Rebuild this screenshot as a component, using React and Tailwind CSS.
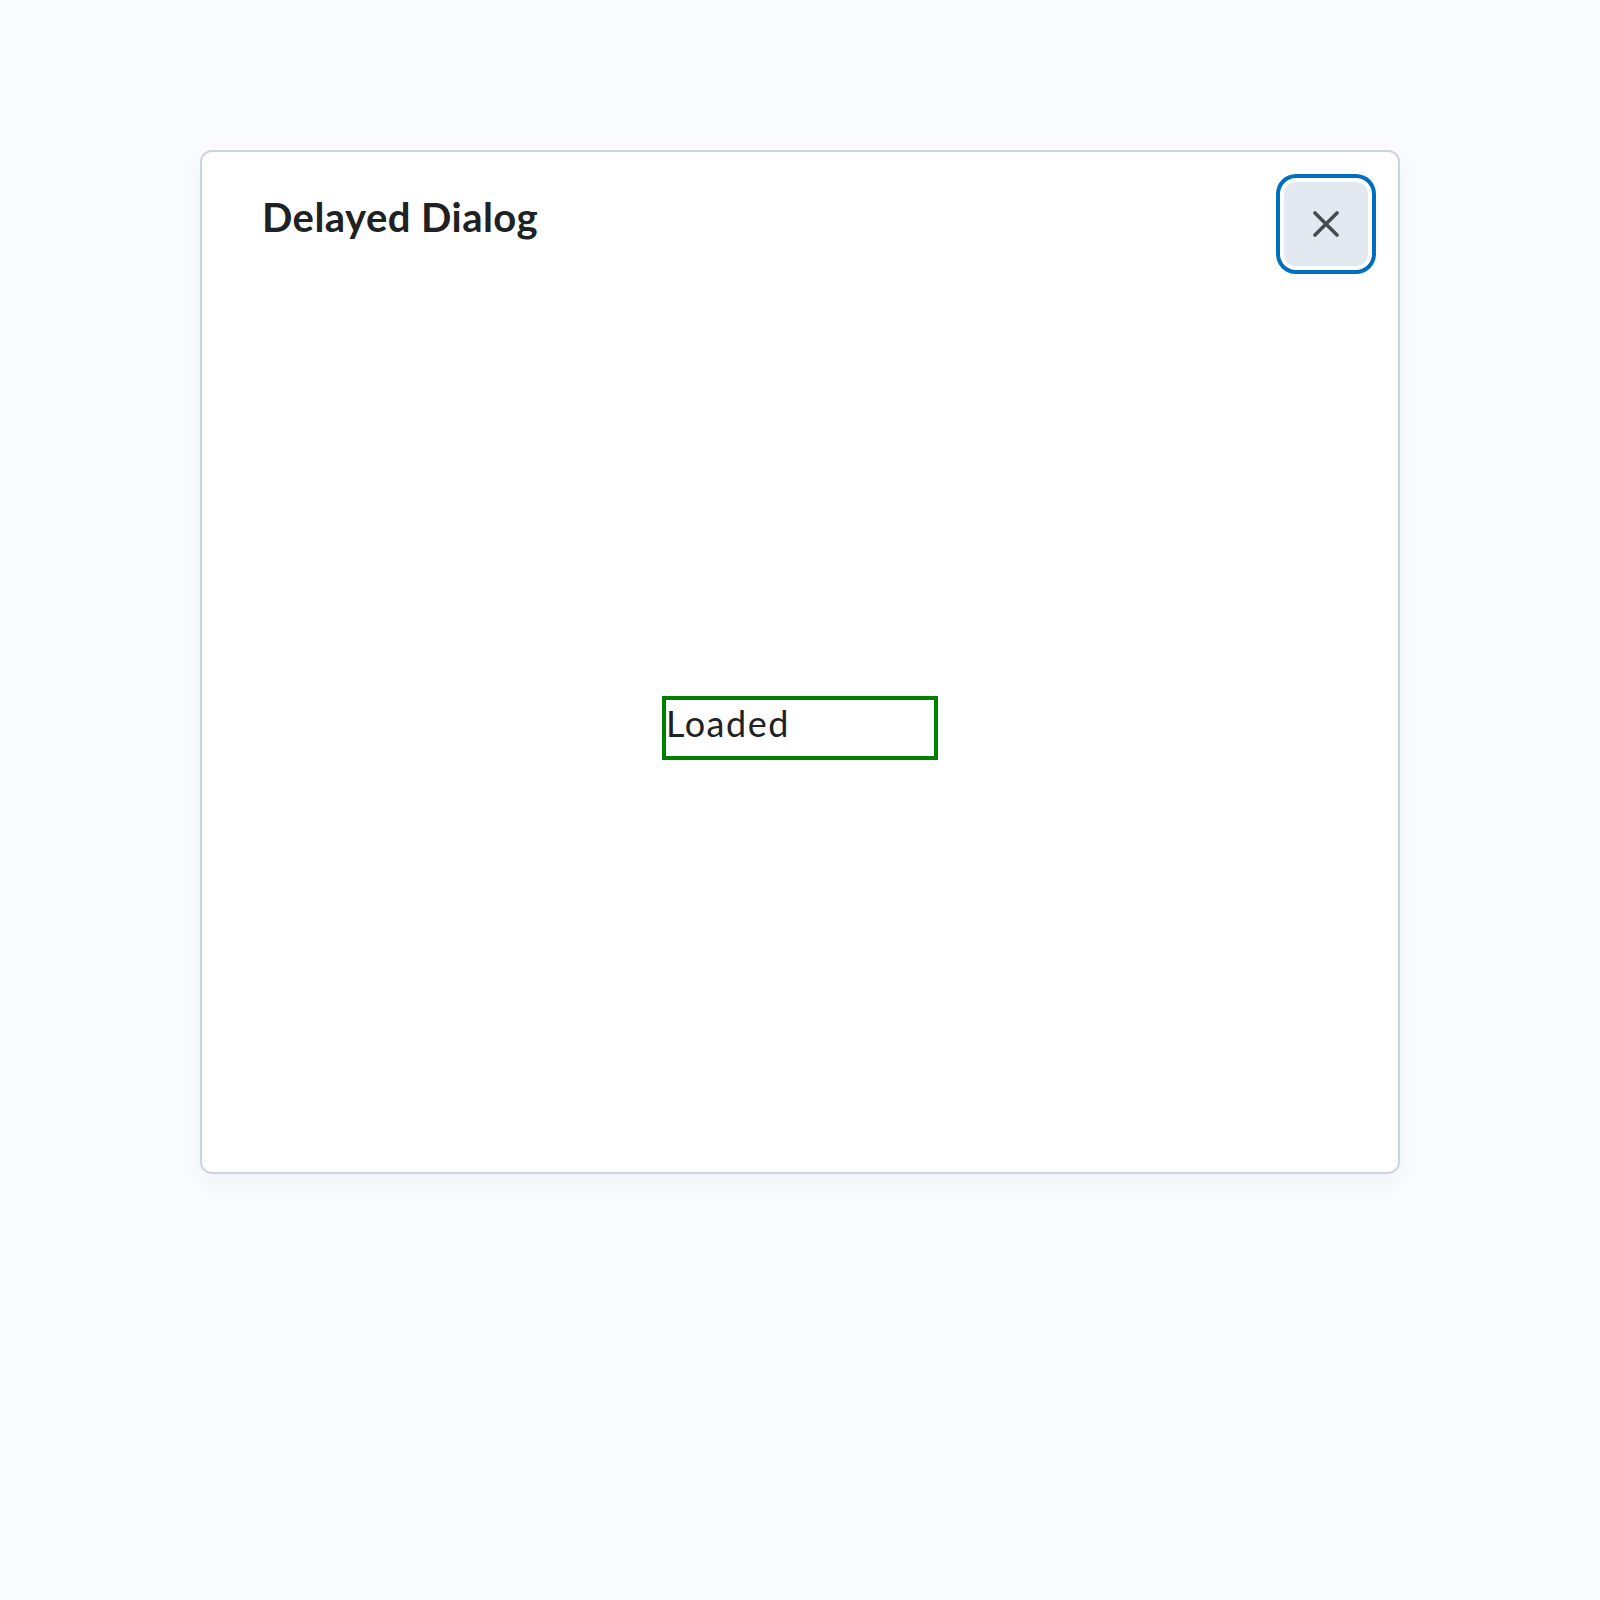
export default function App() {
  return (
    <div
      className="min-h-[1600px] w-full bg-[#f9fbff] pt-[150px]"
      style={{ fontFamily: "Lato, 'Noto Sans', sans-serif" }}
    >
      <div className="mx-auto flex h-[1024px] w-[1200px] flex-col rounded-[12px] border-2 border-[#cdd5dc] bg-white shadow-[0_8px_24px_rgba(0,0,0,0.04)]">
        <div className="flex items-start justify-between pl-[60px] pr-[30px] pt-[30px]">
          <h2 className="mt-[11px] text-[40px] font-bold leading-[48px] tracking-[0.45px] text-[#202122]">
            Delayed Dialog
          </h2>
          <button className="flex h-[84px] w-[84px] items-center justify-center rounded-[12px] bg-[#e3e9f1] shadow-[0_0_0_4px_#ffffff,0_0_0_8px_#006fbf]">
            <svg width="26" height="26" viewBox="0 0 26 26" fill="none">
              <path
                d="M2 2L24 24M24 2L2 24"
                stroke="#494c4e"
                strokeWidth="3.6"
                strokeLinecap="round"
              />
            </svg>
          </button>
        </div>
        <div className="flex justify-center pt-[430px]">
          <div className="h-[64px] w-[276px] border-4 border-[#008000] pt-[1px] text-[36px] leading-[44px] tracking-[1.5px] text-[#202122]">
            Loaded
          </div>
        </div>
      </div>
    </div>
  );
}
